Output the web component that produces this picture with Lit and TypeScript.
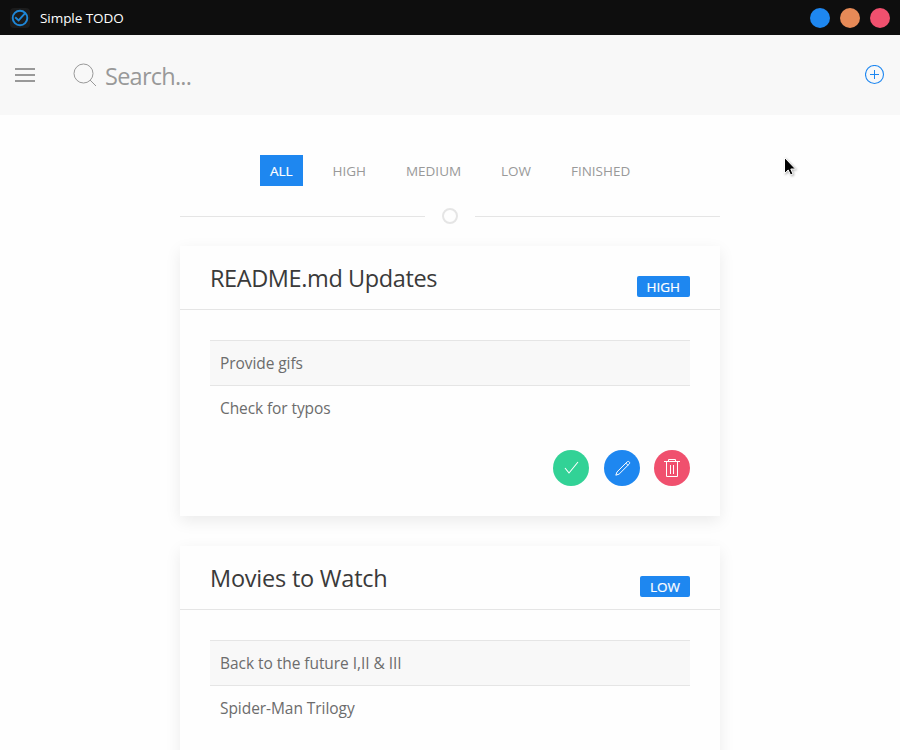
import { LitElement, html, svg, css } from "lit";
import { customElement, property } from "lit/decorators.js";

const icons = {
  check: svg`<polyline fill="none" stroke="currentColor" stroke-width="1.1" points="4,10 8,15 17,4"/>`,
  pencil: svg`<path fill="none" stroke="currentColor" d="M17.25,6.01 L7.12,16.1 L3.82,17.2 L5.02,13.9 L15.12,3.88 C15.71,3.29 16.66,3.29 17.25,3.88 C17.83,4.47 17.83,5.42 17.25,6.01 Z"/><path fill="none" stroke="currentColor" d="M15.98,7.268 L13.851,5.148"/>`,
  trash: svg`<polyline fill="none" stroke="currentColor" points="6.5 3 6.5 1.5 13.5 1.5 13.5 3"/><polyline fill="none" stroke="currentColor" points="4.5 4 4.5 18.5 15.5 18.5 15.5 4"/><rect x="8" y="7" width="1" height="9" fill="currentColor"/><rect x="11" y="7" width="1" height="9" fill="currentColor"/><rect x="2" y="3" width="16" height="1" fill="currentColor"/>`,
};

interface Todo {
  title: string;
  priority: string;
  items: string[];
  titleSpacing: number;
  itemSpacing: number[];
}

const todos: Todo[] = [
  { title: "README.md Updates", priority: "High", items: ["Provide gifs", "Check for typos"], titleSpacing: -0.4, itemSpacing: [-0.08, -0.1] },
  { title: "Movies to Watch", priority: "Low", items: ["Back to the future I,II & III", "Spider-Man Trilogy"], titleSpacing: -0.22, itemSpacing: [-0.05, -0.06] },
];

@customElement("todo-card")
export class TodoCard extends LitElement {
  @property({ attribute: false }) todo!: Todo;

  static styles = css`
    :host { display: block; height: 270px; background: #fefefe; box-shadow: 0 5px 15px rgba(0, 0, 0, 0.08); }
    * { box-sizing: border-box; }
    .header { height: 64px; padding: 0 30px; display: flex; justify-content: space-between; border-bottom: 1px solid #e5e5e5; }
    .title { margin: 0; padding-top: 15px; font-size: 23.5px; font-weight: 400; line-height: 34px; color: #3a3a3a; white-space: nowrap; }
    .badge { margin-top: 30px; height: 21px; padding: 0 10px; border-radius: 2px; background: #1e87f0; color: #fff; font-size: 13.5px; line-height: 22px; text-transform: uppercase; -webkit-text-stroke: 0.2px #fff; }
    .body { padding: 30px; }
    .list { list-style: none; margin: 0; padding: 0; font-size: 15.5px; color: #6c6c6c; }
    .item { height: 45px; padding: 0 10px; line-height: 44px; white-space: nowrap; }
    .item:nth-child(odd) { height: 46px; line-height: 45px; background: #f8f8f8; border: solid #e5e5e5; border-width: 1px 0; }
    .actions { margin-top: 19px; display: flex; justify-content: flex-end; gap: 14.5px; }
    .action { width: 36px; height: 36px; padding: 0; border: 0; border-radius: 50%; display: grid; place-items: center; color: #fff; }
    .done { background: #32d296; }
    .edit { background: #1e87f0; }
    .remove { background: #f0506e; }
  `;

  private action(kind: string, label: string, glyph: unknown) {
    return html`<button class="action ${kind}" aria-label=${label}><svg width="20" height="20" viewBox="0 0 20 20">${glyph}</svg></button>`;
  }

  render() {
    const t = this.todo;
    return html`
      <div class="header">
        <h3 class="title" style="letter-spacing:${t.titleSpacing}px">${t.title}</h3>
        <span class="badge">${t.priority}</span>
      </div>
      <div class="body">
        <ul class="list">
          ${t.items.map((item, i) => html`<li class="item" style="letter-spacing:${t.itemSpacing[i]}px">${item}</li>`)}
        </ul>
        <div class="actions">
          ${this.action("done", "Finish", icons.check)}
          ${this.action("edit", "Edit", icons.pencil)}
          ${this.action("remove", "Delete", icons.trash)}
        </div>
      </div>`;
  }
}

@customElement("app-root")
export class AppRoot extends LitElement {
  static styles = css`
    :host { display: block; position: relative; height: 750px; overflow: hidden; background: #fefefe; font-family: "Open Sans", "Noto Sans", sans-serif; color: #666; }
    * { box-sizing: border-box; }
    svg { display: block; flex: none; }
    .titlebar { height: 35px; padding: 0 10px; display: flex; align-items: center; background: #0e0e0e; color: #fff; }
    .name { margin-left: 10px; font-size: 13.5px; line-height: 20px; letter-spacing: -0.06px; }
    .controls { margin-left: auto; display: flex; gap: 10px; }
    .dot { width: 20px; height: 20px; border-radius: 50%; }
    .minimize { background: #1e87f0; }
    .maximize { background: #e68a57; }
    .close { background: #f0506e; }
    .navbar { height: 80px; padding: 0 15px; display: flex; align-items: center; background: #f8f8f8; color: #999; }
    .search { margin-left: 38px; display: flex; align-items: center; gap: 8px; }
    .hint { font-size: 23.5px; line-height: 34px; padding-top: 1px; letter-spacing: -0.75px; }
    .add { margin-left: auto; color: #1e87f0; }
    .filters { margin-top: 40px; height: 31px; padding-left: 260px; display: flex; gap: 19.9px; font-size: 13.5px; line-height: 32px; text-transform: uppercase; color: #999; }
    .filter { padding: 0 10px; }
    .active { background: #1e87f0; color: #fff; -webkit-text-stroke: 0.2px #fff; }
    .divider { width: 540px; margin: 20px auto; height: 20px; display: flex; align-items: center; justify-content: space-between; }
    .rule { width: 245px; height: 1px; margin-top: 1px; background: #e5e5e5; }
    .cards { width: 540px; margin: 0 auto; display: grid; gap: 30px; }
    .cursor { position: absolute; left: 784px; top: 157px; filter: drop-shadow(1px 1px 1px rgba(0, 0, 0, 0.3)); }
  `;

  render() {
    return html`
      <header class="titlebar">
        <svg width="20" height="20" viewBox="0 0 20 20">
          <rect width="20" height="20" rx="4" fill="#1c1c1c"/>
          <circle cx="10" cy="10" r="7.3" fill="none" stroke="#1e87d8" stroke-width="1.9"/>
          <path d="M5.2 9.3 L8.6 12.4 L15.6 4.6" fill="none" stroke="#1e87d8" stroke-width="1.9"/>
        </svg>
        <span class="name">Simple TODO</span>
        <div class="controls"><i class="dot minimize"></i><i class="dot maximize"></i><i class="dot close"></i></div>
      </header>
      <nav class="navbar">
        <svg width="20" height="20" viewBox="0 0 20 20" fill="currentColor">
          <rect y="3" width="20" height="2"/><rect y="9" width="20" height="2"/><rect y="15" width="20" height="2"/>
        </svg>
        <div class="search">
          <svg width="24" height="24" viewBox="0 0 24 24" fill="none" stroke="currentColor">
            <circle cx="10.5" cy="10.5" r="9.5"/><line x1="23" y1="23" x2="17" y2="17"/>
          </svg>
          <span class="hint">Search...</span>
        </div>
        <svg class="add" width="20" height="20" viewBox="0 0 20 20" fill="none" stroke="currentColor">
          <circle stroke-width="1.1" cx="9.5" cy="9.5" r="9"/><line x1="9.5" y1="5" x2="9.5" y2="14"/><line x1="5" y1="9.5" x2="14" y2="9.5"/>
        </svg>
      </nav>
      <div class="filters">
        ${["All", "High", "Medium", "Low", "Finished"].map((f, i) => html`<span class="filter ${i === 0 ? "active" : ""}">${f}</span>`)}
      </div>
      <div class="divider">
        <span class="rule"></span>
        <svg width="20" height="20" viewBox="0 0 20 20"><circle cx="10" cy="10" r="7" fill="none" stroke="#e5e5e5" stroke-width="2"/></svg>
        <span class="rule"></span>
      </div>
      <main class="cards">${todos.map((t) => html`<todo-card .todo=${t}></todo-card>`)}</main>
      <svg class="cursor" width="12" height="19" viewBox="0 0 12 19">
        <path d="M.5 .5 V16.5 L4.2 13 L6.6 18 L9 17 L6.8 12 H11.5 Z" fill="#000" stroke="#fff"/>
      </svg>`;
  }
}
